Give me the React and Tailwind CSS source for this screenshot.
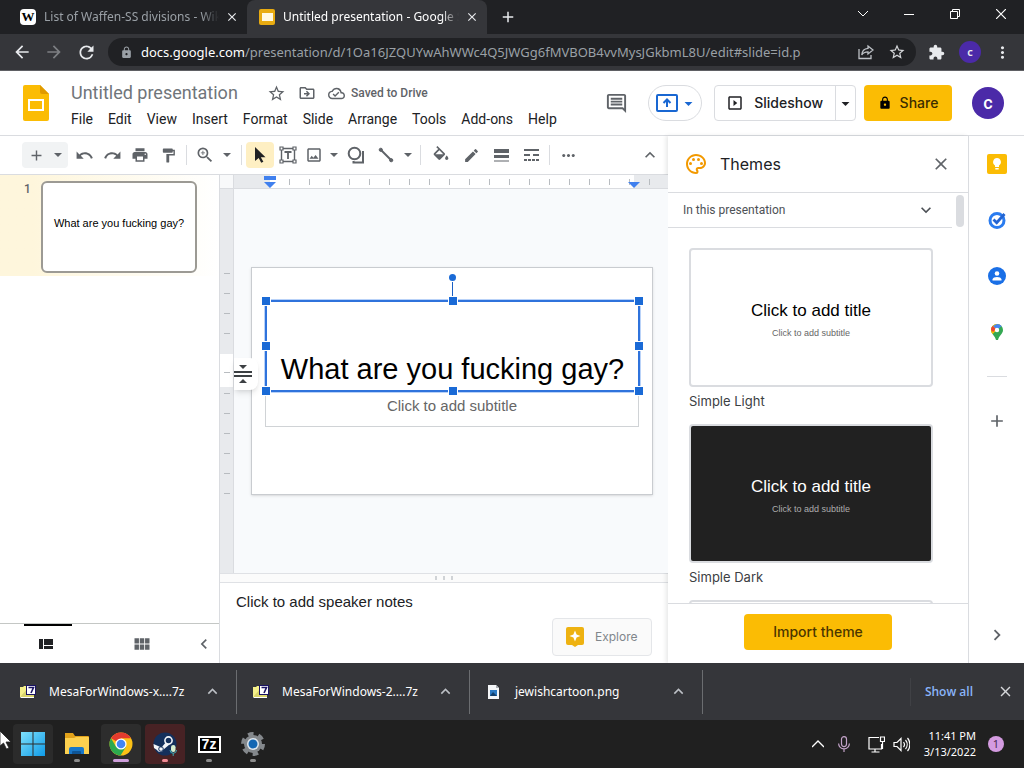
import React from "react";
import {
  MdAdd,
  MdArrowBack,
  MdArrowDropDown,
  MdArrowForward,
  MdChevronLeft,
  MdChevronRight,
  MdClose,
  MdEdit,
  MdExpandLess,
  MdExpandMore,
  MdExtension,
  MdFormatPaint,
  MdLock,
  MdMoreHoriz,
  MdMoreVert,
  MdOutlineCloudDone,
  MdOutlineComment,
  MdOutlineDriveFileMove,
  MdOutlineInsertPhoto,
  MdOutlinePalette,
  MdOutlineSlideshow,
  MdPrint,
  MdRedo,
  MdRefresh,
  MdStarBorder,
  MdUndo,
  MdViewModule,
  MdZoomIn,
} from "react-icons/md";

const menus = ["File", "Edit", "View", "Insert", "Format", "Slide", "Arrange", "Tools", "Add-ons", "Help"];

/* ---------- Browser ---------- */

const Tab = ({ icon, title, active }) => (
  <div
    className={
      active
        ? "flex items-center w-60 h-full pl-3 pr-2 rounded-t-lg bg-[#35363a] text-white"
        : "flex items-center w-[247px] h-full pl-5 pr-2 text-[#9aa0a6]"
    }
  >
    {icon}
    <span className="flex-1 ml-2 overflow-hidden whitespace-nowrap text-xs mask-r-from-90%">{title}</span>
    <button aria-label="Close tab" className="ml-1.5 text-[#e8eaed]">
      <MdClose size={14} />
    </button>
  </div>
);

const BrowserTop = () => (
  <div className="shrink-0 bg-[#202124] font-['Noto_Sans',sans-serif]">
    <div className="flex h-[34px]">
      <Tab
        title="List of Waffen-SS divisions - Wikipedia"
        icon={
          <span className="flex-none flex items-center justify-center w-4 h-4 rounded-sm bg-white text-black text-[13px] leading-4 font-bold font-['Liberation_Serif',serif]">
            W
          </span>
        }
      />
      <Tab
        active
        title="Untitled presentation - Google Slides"
        icon={
          <svg className="flex-none" width="16" height="16" viewBox="0 0 16 16">
            <rect width="16" height="16" rx="2" fill="#e8ab11" />
            <rect x="3" y="4" width="11" height="8" fill="#fff8e1" />
          </svg>
        }
      />
      <button aria-label="New tab" className="ml-3 text-[#e8eaed]">
        <MdAdd size={18} />
      </button>
      <div className="flex ml-auto h-7 text-white">
        <button aria-label="Search tabs" className="flex items-center justify-center w-[46px]">
          <svg width="12" height="12" viewBox="0 0 12 12" fill="none" stroke="currentColor">
            <path d="M1 3l5 5 5-5" />
          </svg>
        </button>
        <button aria-label="Minimize" className="flex items-center justify-center w-[46px]">
          <svg width="10" height="10" viewBox="0 0 10 10" fill="none" stroke="currentColor">
            <path d="M0 5.500h10" />
          </svg>
        </button>
        <button aria-label="Restore" className="flex items-center justify-center w-[46px]">
          <svg width="10" height="10" viewBox="0 0 10 10" fill="none" stroke="currentColor">
            <path d="M.5 2.500h7v7h-7zM2.500 2.500v-2h7v7h-2" />
          </svg>
        </button>
        <button aria-label="Close window" className="flex items-center justify-center w-[46px]">
          <svg width="10" height="10" viewBox="0 0 10 10" fill="none" stroke="currentColor" strokeWidth="1.200">
            <path d="M0 0l10 10M10 0L0 10" />
          </svg>
        </button>
      </div>
    </div>

    <div className="flex items-center h-[37px] pl-2.5 pr-3 bg-[#35363a] border-b border-[#5f6064] text-[#e8eaed]">
      <button aria-label="Back" className="flex justify-center w-6 mr-2">
        <MdArrowBack size={20} />
      </button>
      <button aria-label="Forward" className="flex justify-center w-6 mr-2 text-[#7d7f83]">
        <MdArrowForward size={20} />
      </button>
      <button aria-label="Reload" className="flex justify-center w-6 mr-2.5">
        <MdRefresh size={21} />
      </button>
      <div className="flex flex-1 items-center h-7 min-w-0 pl-3 pr-2.5 rounded-full bg-[#202124]">
        <MdLock size={13} className="flex-none text-[#9aa0a6]" />
        <div
          role="textbox"
          aria-label="Address"
          className="flex-1 ml-2 overflow-hidden whitespace-nowrap text-[13px] leading-6 text-[#9aa0a6]"
        >
          <span className="text-white">docs.google.com</span>
          /presentation/d/1Oa16JZQUYwAhWWc4Q5JWGg6fMVBOB4vvMysJGkbmL8U/edit#slide=id.p
        </div>
        <button aria-label="Share this page" className="mr-3.5 text-[#bdc1c6]">
          <svg width="16" height="16" viewBox="0 0 16 16" fill="none" stroke="currentColor" strokeWidth="1.300">
            <path d="M1 5v9.500h12V11M10 2l5 4-5 4V7.800C7 7.800 5 8.500 3.800 11 4 7 6.500 4.600 10 4.300z" />
          </svg>
        </button>
        <button aria-label="Bookmark" className="text-[#d5d7da]">
          <MdStarBorder size={18} />
        </button>
      </div>
      <button aria-label="Extensions" className="ml-3">
        <MdExtension size={17} />
      </button>
      <button className="flex items-center justify-center w-[22px] h-[22px] ml-3.5 rounded-full bg-[#4b2aa8] text-[11px] leading-4 font-semibold">
        c
      </button>
      <button aria-label="Browser menu" className="ml-3">
        <MdMoreVert size={19} />
      </button>
    </div>
  </div>
);

/* ---------- Docs header ---------- */

const Header = () => (
  <header className="flex shrink-0 items-center h-[65px] pl-[23px] pr-5 border-b border-[#dadce0] text-[#5f6368]">
    <svg className="flex-none" width="26" height="36" viewBox="0 0 26 36">
      <path d="M2 0h15l9 9v25a2 2 0 0 1-2 2H2a2 2 0 0 1-2-2V2a2 2 0 0 1 2-2z" fill="#fbbc04" />
      <path d="M17 0l9 9h-7a2 2 0 0 1-2-2z" fill="#e09a00" />
      <path d="M6 15h14v10H6z" fill="none" stroke="#fff" strokeWidth="2" />
    </svg>
    <div className="flex-1 ml-[22px] pt-1 min-w-0">
      <div className="flex items-center h-6">
        <input
          aria-label="Document title"
          defaultValue="Untitled presentation"
          className="w-48 text-lg text-[#70757a] outline-none"
        />
        <button aria-label="Star" className="ml-1">
          <MdStarBorder size={19} />
        </button>
        <button aria-label="Move" className="ml-3">
          <MdOutlineDriveFileMove size={18} />
        </button>
        <MdOutlineCloudDone size={17} className="ml-3" />
        <span className="ml-1.5 text-xs font-medium">Saved to Drive</span>
      </div>
      <nav className="flex gap-[15px] mt-1 text-sm text-[#202124]">
        {menus.map((item) => (
          <button key={item}>{item}</button>
        ))}
      </nav>
    </div>
    <button aria-label="Comments" className="mr-5">
      <MdOutlineComment size={23} />
    </button>
    <button
      aria-label="Present to a meeting"
      className="flex items-center justify-center w-[54px] h-9 pl-1 mr-3 rounded-full border border-[#dadce0] text-[#1967d2]"
    >
      <svg width="22" height="18" viewBox="0 0 22 18" fill="none" stroke="currentColor" strokeWidth="2">
        <rect x="1" y="1" width="20" height="16" rx="1" />
        <path d="M11 13V6M7.500 9L11 5.500 14.500 9" />
      </svg>
      <MdArrowDropDown size={19} className="ml-px" />
    </button>
    <div className="flex h-9 mr-2 rounded border border-[#dadce0] font-['Inter',sans-serif] text-[#202124]">
      <button className="flex items-center pl-[11px] pr-3 text-sm font-medium border-r border-[#dadce0]">
        <MdOutlineSlideshow size={18} className="mr-2.5" />
        Slideshow
      </button>
      <button aria-label="Slideshow options" className="flex items-center">
        <MdArrowDropDown size={19} />
      </button>
    </div>
    <button className="flex items-center justify-center w-[88px] h-9 rounded bg-[#fbbc04] font-['Inter',sans-serif] text-sm font-medium text-[#3c2d00]">
      <MdLock size={14} className="mr-2 text-black" />
      Share
    </button>
    <button className="flex items-center justify-center w-8 h-8 ml-5 rounded-full bg-[#4b2aa8] text-lg font-medium text-white">
      c
    </button>
  </header>
);

/* ---------- Toolbar ---------- */

const Tool = ({ label, active, children }) => (
  <button
    aria-label={label}
    className={
      active
        ? "flex items-center justify-center w-7 h-[26px] rounded-sm bg-[#feefc3] text-[#202124]"
        : "flex items-center justify-center w-7 h-[26px]"
    }
  >
    {children}
  </button>
);

const Caret = () => (
  <button aria-label="More options" className="flex items-center justify-center w-3 h-[26px]">
    <svg width="8" height="4" viewBox="0 0 8 4">
      <path d="M0 0h8L4 4z" fill="currentColor" />
    </svg>
  </button>
);

const Divider = () => <div className="w-px h-5 mx-1 bg-[#dadce0]" />;

const Toolbar = () => (
  <div className="flex shrink-0 items-center h-[39px] pl-[22px] pr-2 border-b border-[#dadce0] text-[#5f6368]">
    <div className="flex items-center justify-between w-[46px] h-[26px] mr-0.5 pr-1 rounded-sm bg-[#f1f3f4]">
      <Tool label="New slide">
        <MdAdd size={17} />
      </Tool>
      <Caret />
    </div>
    <Tool label="Undo">
      <MdUndo size={19} />
    </Tool>
    <Tool label="Redo">
      <MdRedo size={19} />
    </Tool>
    <Tool label="Print">
      <MdPrint size={18} />
    </Tool>
    <Tool label="Paint format">
      <MdFormatPaint size={17} />
    </Tool>
    <Divider />
    <Tool label="Zoom">
      <MdZoomIn size={20} />
    </Tool>
    <div className="flex mx-0.5">
      <Caret />
    </div>
    <div className="ml-0.5">
      <Divider />
    </div>
    <Tool label="Select" active>
      <svg width="12" height="16" viewBox="0 0 12 16">
        <path d="M1 0l10.500 10.200H6.800l2.600 4.600-2.200 1-2.500-4.900L1 14z" fill="currentColor" />
      </svg>
    </Tool>
    <Tool label="Text box">
      <svg width="18" height="18" viewBox="0 0 18 18" fill="none" stroke="currentColor">
        <path d="M2.500 2.500h13v13h-13z" strokeWidth="1.400" />
        <path d="M5.500 6h7M9 6v7" strokeWidth="1.800" />
        <path
          d="M1 1h3v3H1zM14 1h3v3h-3zM1 14h3v3H1zM14 14h3v3h-3z"
          fill="#fff"
          strokeWidth="1.200"
        />
      </svg>
    </Tool>
    <div className="flex mr-0.5 -ml-0.5">
      <Tool label="Insert image">
        <MdOutlineInsertPhoto size={18} />
      </Tool>
      <Caret />
    </div>
    <div className="flex gap-0.5">
      <Tool label="Shape">
        <svg width="18" height="18" viewBox="0 0 18 18" fill="none" stroke="currentColor" strokeWidth="2">
          <circle cx="7.500" cy="7.500" r="5.800" />
          <path d="M15 6h1v10.500H6.500V15" />
        </svg>
      </Tool>
      <Tool label="Line">
        <svg width="16" height="16" viewBox="0 0 16 16" fill="currentColor" stroke="currentColor">
          <path d="M3 3l10 10" strokeWidth="2" />
          <circle cx="2.800" cy="2.800" r="1.600" />
          <circle cx="13.200" cy="13.200" r="1.600" />
        </svg>
      </Tool>
      <Caret />
    </div>
    <div className="mx-0.5">
      <Divider />
    </div>
    <div className="flex gap-0.5">
      <Tool label="Fill color">
        <svg width="18" height="18" viewBox="1 0 22 22" fill="currentColor">
          <path d="M16.560 8.940L7.620 0 6.210 1.410l2.380 2.380-5.150 5.150c-.59.590-.59 1.540 0 2.120l5.500 5.500c.29.290.68.440 1.060.440s.77-.15 1.060-.44l5.500-5.500c.59-.58.59-1.530 0-2.120zM5.210 10L10 5.210 14.790 10zM19 11.500s-2 2.170-2 3.500c0 1.100.9 2 2 2s2-.9 2-2c0-1.330-2-3.500-2-3.500z" />
        </svg>
      </Tool>
      <Tool label="Border color">
        <MdEdit size={17} />
      </Tool>
      <Tool label="Border weight">
        <svg width="15" height="13" viewBox="0 0 15 13" fill="currentColor">
          <path d="M0 0h15v4H0zM0 6h15v3H0zM0 11.500h15v1H0z" />
        </svg>
      </Tool>
      <Tool label="Border dash">
        <svg width="15" height="12" viewBox="0 0 15 12" fill="currentColor">
          <path d="M0 0h15v2H0zM0 5h6v2H0zM9 5h6v2H9zM0 10h3v2H0zM4 10h3v2H4zM8 10h3v2H8zM12 10h3v2h-3z" />
        </svg>
      </Tool>
    </div>
    <Divider />
    <Tool label="More">
      <MdMoreHoriz size={19} />
    </Tool>
    <button aria-label="Hide the menus" className="ml-auto">
      <MdExpandLess size={20} />
    </button>
  </div>
);

/* ---------- Filmstrip ---------- */

const Filmstrip = () => (
  <aside className="flex shrink-0 flex-col w-[220px] border-r border-[#dadce0]">
    <div className="flex items-start h-[101px] pt-1.5 pl-6 bg-linear-to-r from-[#fef6dc] from-15% to-white">
      <span className="w-[17px] text-xs font-medium text-[#5f6368]">1</span>
      <div className="w-39 h-23 pt-8 rounded-md border-2 border-[#9c9a94] bg-white text-center text-[11px] leading-4 text-black font-['Liberation_Sans',sans-serif]">
        What are you fucking gay?
      </div>
    </div>
    <div className="flex items-center h-10 mt-auto border-t border-[#c4c7c5] text-[#5f6368]">
      <button aria-label="Filmstrip view" className="relative flex items-center justify-center w-24 h-full pr-1 text-[#202124]">
        <span className="absolute top-0 left-6 w-12 h-0.5 bg-black" />
        <svg width="14" height="10" viewBox="0 0 14 10" fill="currentColor">
          <path d="M0 0h4v10H0zM5 0h9v6H5zM5 7h9v3H5z" />
        </svg>
      </button>
      <button aria-label="Grid view" className="flex items-center justify-center w-24 h-full pr-1">
        <MdViewModule size={20} />
      </button>
      <button aria-label="Hide filmstrip" className="ml-0.5">
        <MdChevronLeft size={20} />
      </button>
    </div>
  </aside>
);

/* ---------- Canvas ---------- */

const handles = [
  "-left-[5px] -top-[5px]",
  "left-[182px] -top-[5px]",
  "-right-[5px] -top-[5px]",
  "-left-[5px] top-10",
  "-right-[5px] top-10",
  "-left-[5px] -bottom-[5px]",
  "left-[182px] -bottom-[5px]",
  "-right-[5px] -bottom-[5px]",
];

const HorizontalRuler = () => (
  <div className="relative flex shrink-0 items-center h-3.5 border-b border-[#dadce0] bg-[#e8eaed]">
    <div className="w-9" />
    <div className="flex items-center w-[364px] h-full bg-white">
      {Array.from({ length: 18 }, (_, i) => (
        <div key={i} className="w-5 h-1.5 border-r border-[#b8bcc0]" />
      ))}
    </div>
    <div className="w-4 h-1.5 border-r border-[#b8bcc0]" />
    <svg className="absolute left-[30px] top-0" width="12" height="14" viewBox="0 0 12 14" fill="#4080ee">
      <path d="M0 1h12v4H0zM0 7h12l-6 6z" />
    </svg>
    <svg className="absolute left-[394px] top-0" width="12" height="14" viewBox="0 0 12 14" fill="#4080ee">
      <path d="M0 7h12l-6 6z" />
    </svg>
  </div>
);

const VerticalRuler = () => (
  <div className="flex shrink-0 flex-col w-3.5 border-r border-[#dadce0] bg-[#e8eaed]">
    <div className="h-3.5 shrink-0 border-b border-[#dadce0] bg-[#f8f9fa]" />
    <div className="flex flex-1 flex-col items-center justify-center pt-1">
      {Array.from({ length: 12 }, (_, i) => (
        <div
          key={i}
          className={
            i === 5
              ? "flex shrink-0 items-center self-stretch justify-center h-[33px] -mt-[9px] -mb-1 pt-1 bg-white"
              : "flex shrink-0 items-center h-5"
          }
        >
          {i !== 4 && <span className="w-1.5 h-px bg-[#b8bcc0]" />}
        </div>
      ))}
    </div>
  </div>
);

const Slide = () => (
  <div className="relative shrink-0 w-[402px] h-[228px] border border-[#c9ccd0] bg-white shadow-sm font-['Liberation_Sans',sans-serif]">
    {/* subtitle placeholder */}
    <div className="absolute left-[13px] top-[123px] w-[374px] h-9 pt-0.5 border border-[#d0d3d6] text-center text-[15px] leading-6 text-[#666]">
      Click to add subtitle
    </div>
    {/* selected title */}
    <div className="absolute left-[13px] top-8 w-[375px] h-[92px] pt-[49px] border-2 border-[#2f73dc] outline outline-[#b9d2f8] text-center text-[29px] leading-9 whitespace-nowrap text-black">
      What are you fucking gay?
      <span className="absolute left-[185px] -top-5 w-px h-5 bg-[#1a5fc4]" />
      <span className="absolute left-[182px] -top-7 w-[7px] h-[7px] rounded-full bg-[#1a6ad6]" />
      {handles.map((place) => (
        <span key={place} className={`absolute w-2 h-2 bg-[#1a6ad6] outline outline-white ${place}`} />
      ))}
    </div>
  </div>
);

const Editor = () => (
  <main className="flex flex-1 flex-col min-w-0">
    <div className="relative flex flex-1 min-h-0">
      <VerticalRuler />
      <div className="flex flex-1 flex-col min-w-0">
        <HorizontalRuler />
        <div className="flex flex-1 items-center justify-center min-h-0 pl-0.5 bg-[#f8fafc]">
          <Slide />
        </div>
      </div>
      <button
        aria-label="Resize"
        className="absolute left-3.5 top-[183px] flex items-center w-6 h-8 rounded-r-lg bg-white shadow-md text-[#3c4043]"
      >
        <svg width="18" height="20" viewBox="0 0 18 20" fill="currentColor">
          <path d="M5 1h8L9 5zM0 7h18v2H0zM0 11h18v2H0zM9 15l4 4H5z" />
        </svg>
      </button>
    </div>
    <div className="flex shrink-0 items-center justify-center gap-1.5 h-2.5 border-y border-[#dfe1e5] bg-[#fbfbfb]">
      <span className="w-0.5 h-1 bg-[#d0d3d6]" />
      <span className="w-0.5 h-1 bg-[#d0d3d6]" />
      <span className="w-0.5 h-1 bg-[#d0d3d6]" />
    </div>
    <div className="flex shrink-0 items-end h-20 pl-4 pr-4 pb-[7px]">
      <textarea
        aria-label="Speaker notes"
        defaultValue="Click to add speaker notes"
        className="flex-1 self-stretch pt-[7px] resize-none outline-none text-[15px] leading-6 text-[#202124] font-['Liberation_Sans',sans-serif]"
      />
      <button className="flex items-center w-[100px] h-[38px] pl-3 rounded border border-[#e4e6e9] bg-[#fafafa] font-['Inter',sans-serif] text-xs text-[#80868b]">
        <svg className="mr-2.5" width="20" height="20" viewBox="0 0 20 20">
          <path d="M3 0h14a2 2 0 0 1 2 2v14a2 2 0 0 1-2 2h-4l-3 2-3-2H3a2 2 0 0 1-2-2V2a2 2 0 0 1 2-2z" fill="#eeb211" />
          <path d="M10 3.500l1.600 3.900 3.900 1.600-3.900 1.600L10 14.500l-1.600-3.900L4.500 9l3.900-1.600z" fill="#fff" />
        </svg>
        Explore
      </button>
    </div>
  </main>
);

/* ---------- Themes ---------- */

const ThemeCard = ({ name, dark, children }) => (
  <div className="shrink-0 h-44 w-[244px]">
    <button
      aria-label={name}
      className={
        dark
          ? "block w-full h-[139px] pt-1.5 rounded-sm border-2 border-[#dadce0] bg-[#212121] text-white font-['Liberation_Sans',sans-serif]"
          : "block w-full h-[139px] pt-1.5 rounded-sm border-2 border-[#dadce0] bg-white text-black font-['Liberation_Sans',sans-serif]"
      }
    >
      {children}
    </button>
    <div className="pt-1 font-['Inter',sans-serif] text-[13px] leading-5 text-[#3c4043]">{name}</div>
  </div>
);

const ThemesPanel = () => (
  <section className="flex shrink-0 flex-col w-[300px] shadow-[-2px_0_4px_rgba(60,64,67,0.12)]">
    <div className="flex shrink-0 items-center h-14 pl-4 pr-[17px] text-[#5f6368]">
      <MdOutlinePalette size={24} className="text-[#f29900]" />
      <h2 className="ml-3 font-['Inter',sans-serif] text-base text-[#202124]">Themes</h2>
      <button aria-label="Close themes" className="ml-auto">
        <MdClose size={20} />
      </button>
    </div>
    <div className="flex flex-1 min-h-0 border-t border-[#dadce0]">
      <div className="flex flex-col w-[284px] min-h-0 overflow-hidden">
        <button className="flex shrink-0 items-center justify-between h-[35px] pl-[15px] pr-4 border-b border-[#dadce0] text-xs text-[#4d5156]">
          In this presentation
          <MdExpandMore size={20} />
        </button>
        <div className="flex flex-1 flex-col min-h-0 pt-5 pl-[21px] overflow-hidden">
          <ThemeCard name="Simple Light">
            <div className="text-[17px] leading-5">Click to add title</div>
            <div className="mt-1 text-[9px] leading-4 text-[#666]">Click to add subtitle</div>
          </ThemeCard>
          <ThemeCard name="Simple Dark" dark>
            <div className="text-[17px] leading-5">Click to add title</div>
            <div className="mt-1 text-[9px] leading-4 text-[#adadad]">Click to add subtitle</div>
          </ThemeCard>
          <ThemeCard />
        </div>
      </div>
      <div className="w-2 h-8 mt-0.5 ml-1 rounded-sm bg-[#dadce0]" />
    </div>
    <div className="flex shrink-0 justify-center h-[60px] pt-2.5 border-t border-[#dadce0]">
      <button className="w-[148px] h-9 rounded bg-[#fbbc04] font-['Inter',sans-serif] text-sm font-medium text-[#4a3600]">
        Import theme
      </button>
    </div>
  </section>
);

const SideRail = () => (
  <aside className="flex shrink-0 flex-col items-center w-14 pt-4.5 pb-[17px] border-l border-[#dadce0] text-[#5f6368]">
    <button aria-label="Keep" className="h-5 mb-9">
      <svg width="20" height="20" viewBox="0 0 20 20">
        <rect width="20" height="20" rx="2" fill="#fbbc04" />
        <path d="M10 4a4 4 0 0 0-2 7.400V13h4v-1.600A4 4 0 0 0 10 4zM8.300 14h3.400v1.500H8.300z" fill="#fff" />
      </svg>
    </button>
    <button aria-label="Tasks" className="h-5 mb-9">
      <svg width="20" height="20" viewBox="0 0 20 20" fill="none">
        <circle cx="10" cy="10.500" r="7" stroke="#2a7cf0" strokeWidth="3" />
        <path d="M6.500 9.500l3.200 3.200L17.500 4" stroke="#2364d2" strokeWidth="2.800" />
      </svg>
    </button>
    <button aria-label="Contacts" className="h-5 mb-9">
      <svg width="20" height="20" viewBox="0 0 20 20">
        <circle cx="10" cy="10" r="9" fill="#1a6fe6" />
        <circle cx="10" cy="7.500" r="2.300" fill="#fff" />
        <path d="M5.500 14.500v-1c0-1.700 2.500-2.500 4.500-2.500s4.500.8 4.500 2.500v1z" fill="#fff" />
      </svg>
    </button>
    <button aria-label="Maps" className="h-5">
      <svg width="20" height="20" viewBox="0 0 20 20">
        <path d="M10 2a6 6 0 0 1 6 6c0 4-4 5.500-5 10H9C8 13.500 4 12 4 8a6 6 0 0 1 6-6z" fill="#34a853" />
        <path d="M4 8c0 1.600.7 2.900 1.700 4L14 3.600A6 6 0 0 0 4 8z" fill="#fbbc04" />
        <path d="M10 2a6 6 0 0 1 4.600 2.100L10 8 6 4z" fill="#4285f4" />
        <path d="M5.700 3.900L9 7l-3 3-2-2c0-1.700.7-3.100 1.700-4.100z" fill="#ea4335" />
        <circle cx="10" cy="8" r="2.200" fill="#fff" />
      </svg>
    </button>
    <div className="w-5 h-px mt-[34px] bg-[#dadce0]" />
    <button aria-label="Get add-ons" className="mt-8.5">
      <MdAdd size={20} />
    </button>
    <button aria-label="Hide side panel" className="mt-auto">
      <MdChevronRight size={22} />
    </button>
  </aside>
);

/* ---------- Downloads and taskbar ---------- */

const ZipIcon = () => (
  <svg width="16" height="16" viewBox="0 0 16 16">
    <path d="M0 3h3l1-1h4v11H0z" fill="#f5f08a" />
    <path d="M0 13h14v1H1z" fill="#fff" />
    <path d="M8 4h6v9H1v-1z" fill="#d9d46a" />
    <rect x="6.500" y="1.500" width="9" height="9" fill="#fff" stroke="#1b1464" />
    <path d="M8.500 3.500h5L11 9" fill="none" stroke="#1b1464" strokeWidth="1.600" />
  </svg>
);

const ImageIcon = () => (
  <svg width="16" height="16" viewBox="0 0 16 16">
    <path d="M2 1h8l3 3v11H2z" fill="#f4f6f8" />
    <path d="M10 1l3 3h-3z" fill="#a8adb3" />
    <rect x="4" y="6" width="7" height="6" fill="#2b7ac4" />
    <path d="M4 12l3-4 4 4z" fill="#12406e" />
  </svg>
);

const Download = ({ icon, name }) => (
  <div className="flex items-center w-[233px] h-11 pl-4 pr-3.5 border-r border-[#6b6d70]">
    {icon}
    <span className="ml-[13px] text-xs text-white">{name}</span>
    <button aria-label="Download options" className="ml-auto text-[#bdc1c6]">
      <MdExpandLess size={19} />
    </button>
  </div>
);

const DownloadsBar = () => (
  <div className="flex shrink-0 items-center h-[57px] pl-1 pr-2.5 bg-[#35363a] font-['Noto_Sans',sans-serif]">
    <Download icon={<ZipIcon />} name="MesaForWindows-x....7z" />
    <Download icon={<ZipIcon />} name="MesaForWindows-2....7z" />
    <Download icon={<ImageIcon />} name="jewishcartoon.png" />
    <button className="h-7 ml-auto pl-3.5 border-l border-[#404145] text-xs font-semibold text-[#8ab4f8] font-['Open_Sans',sans-serif]">
      Show all
    </button>
    <button aria-label="Close downloads" className="ml-6 text-[#d5d7da]">
      <MdClose size={17} />
    </button>
  </div>
);

const TaskIcon = ({ label, className, mark, children }) => (
  <button aria-label={label} className={`relative flex items-center justify-center w-10 h-10 rounded ${className}`}>
    {children}
    {mark && <span className={`absolute bottom-0.5 h-[3px] rounded-full ${mark}`} />}
  </button>
);

const Taskbar = () => (
  <footer className="relative flex shrink-0 items-center gap-1 h-12 pl-[13px] pr-5 bg-[#202020] text-white font-['Noto_Sans',sans-serif]">
    <TaskIcon label="Start" className="bg-[#2b2b2b]">
      <svg width="24" height="24" viewBox="0 0 24 24">
        <defs>
          <linearGradient id="win" x1="0" y1="0" x2="1" y2="1">
            <stop offset="0" stopColor="#7ee0fb" />
            <stop offset="1" stopColor="#0f9be8" />
          </linearGradient>
        </defs>
        <path d="M0 0h11.500v11.500H0zM12.500 0H24v11.500H12.500zM0 12.500h11.500V24H0zM12.500 12.500H24V24H12.500z" fill="url(#win)" />
      </svg>
    </TaskIcon>
    <TaskIcon label="File Explorer" className="" mark="w-1.5 bg-[#8d8d8d]">
      <svg width="26" height="24" viewBox="0 0 26 24">
        <path d="M1 1h8l2 3h13a1 1 0 0 1 1 1v6H1z" fill="#e2a21a" />
        <path d="M1 6h9l2-1h12a1 1 0 0 1 1 1v16H1z" fill="#fcd04f" />
        <path d="M5 22v-5a2 2 0 0 1 2-2h11a2 2 0 0 1 2 2v5z" fill="#1877c9" />
        <path d="M8 22v-2a1 1 0 0 1 1-1h7a1 1 0 0 1 1 1v2z" fill="#0f5596" />
      </svg>
    </TaskIcon>
    <TaskIcon label="Chrome" className="bg-[#2d2d2d]" mark="w-4 bg-[#cf9fdc]">
      <svg width="24" height="24" viewBox="0 0 24 24">
        <circle cx="12" cy="12" r="11.500" fill="#fbc116" />
        <path d="M12 12L2 6.200A11.500 11.500 0 0 1 22 6.200H12z" fill="#e33b2e" />
        <path d="M2 6.200a11.500 11.500 0 0 0 9.500 17.300L17 14.800 7 14.800z" fill="#2da94f" />
        <circle cx="12" cy="12" r="5.600" fill="#fff" />
        <circle cx="12" cy="12" r="4.300" fill="#4285f4" />
      </svg>
    </TaskIcon>
    <TaskIcon label="Steam" className="bg-[#472224]" mark="w-1.5 bg-[#f08a94]">
      <svg width="24" height="24" viewBox="0 0 24 24">
        <circle cx="12" cy="12" r="11.500" fill="#14305c" />
        <path d="M.5 12l8 3.500 5-6 3 3-6 5A3.500 3.500 0 0 1 4 18L1 16z" fill="#f3f6fa" />
        <circle cx="15.500" cy="8.500" r="3.600" fill="#14305c" stroke="#f3f6fa" strokeWidth="1.600" />
        <circle cx="8" cy="17" r="2.300" fill="none" stroke="#14305c" />
        <rect x="18" y="13" width="4.500" height="7" rx="2.200" fill="#d8f0d0" />
        <path d="M17 18a3.200 3.200 0 0 0 6.500 0M20.200 21v3" stroke="#3da7b0" fill="none" />
      </svg>
    </TaskIcon>
    <TaskIcon label="7-Zip" className="" mark="w-1.5 bg-[#8d8d8d]">
      <span className="flex items-center justify-center w-[23px] h-[17px] border-2 border-white bg-black text-sm leading-3 font-bold font-['Liberation_Sans',sans-serif]">
        7z
      </span>
    </TaskIcon>
    <TaskIcon label="Settings" className="" mark="w-1.5 bg-[#8d8d8d]">
      <svg width="26" height="26" viewBox="0 0 26 26">
        <circle cx="13" cy="13" r="10" fill="none" stroke="#84888c" strokeWidth="4" strokeDasharray="5.470 5" />
        <circle cx="13" cy="13" r="9" fill="#84888c" />
        <circle cx="13" cy="13" r="6" fill="#dfe7ee" />
        <circle cx="13" cy="13" r="4.500" fill="#1467b3" />
      </svg>
    </TaskIcon>

    <button aria-label="Hidden icons" className="ml-auto mr-2">
      <svg width="12" height="12" viewBox="0 0 12 12" fill="none" stroke="currentColor" strokeWidth="1.400">
        <path d="M0 9l6-6 6 6" />
      </svg>
    </button>
    <button aria-label="Microphone" className="mr-3 text-[#c3a3c9]">
      <svg width="16" height="16" viewBox="0 0 16 16" fill="none" stroke="currentColor" strokeWidth="1.200">
        <rect x="5.500" y=".6" width="5" height="10" rx="2.500" />
        <path d="M2.600 7.500a5.400 5.400 0 0 0 10.800 0M8 13v3" />
      </svg>
    </button>
    <button aria-label="Network and volume" className="flex gap-2 mr-2.5">
      <svg width="17" height="17" viewBox="0 0 17 17" fill="none" stroke="currentColor" strokeWidth="1.200">
        <path d="M11 1.500H1v11.500h12.500V8M7 13v3M3.500 16h8M12.500 1h4v4.500h-4zM14.500 6v7" />
      </svg>
      <svg width="17" height="17" viewBox="0 0 17 17" fill="none" stroke="currentColor" strokeWidth="1.200">
        <path d="M1 6.500h3l4-4v12l-4-4H1zM10.500 6a4 4 0 0 1 0 5M12.500 4a7 7 0 0 1 0 9M14.500 2a10 10 0 0 1 0 13" />
      </svg>
    </button>
    <div className="mr-2 text-right text-[11px] leading-4">
      <div>11:41 PM</div>
      <div>3/13/2022</div>
    </div>
    <span className="flex items-center justify-center w-4 h-4 rounded-full bg-[#d49be0] text-[11px] leading-4 text-[#4b2a52]">
      1
    </span>

    {/* mouse pointer over the taskbar edge */}
    <svg className="absolute left-0 top-2.5" width="12" height="20" viewBox="0 0 12 20">
      <path d="M0 1l11 11H6l3 6-2.500 1-3-6L0 16z" fill="#fff" stroke="#222" strokeWidth=".8" />
    </svg>
  </footer>
);

const App = () => {
  return (
    <div className="flex flex-col h-screen overflow-hidden bg-white antialiased font-['Roboto',sans-serif]">
      <BrowserTop />
      <Header />
      <div className="flex flex-1 min-h-0">
        <div className="flex flex-1 flex-col min-w-0">
          <Toolbar />
          <div className="flex flex-1 min-h-0">
            <Filmstrip />
            <Editor />
          </div>
        </div>
        <ThemesPanel />
        <SideRail />
      </div>
      <DownloadsBar />
      <Taskbar />
    </div>
  );
};

export default App;
